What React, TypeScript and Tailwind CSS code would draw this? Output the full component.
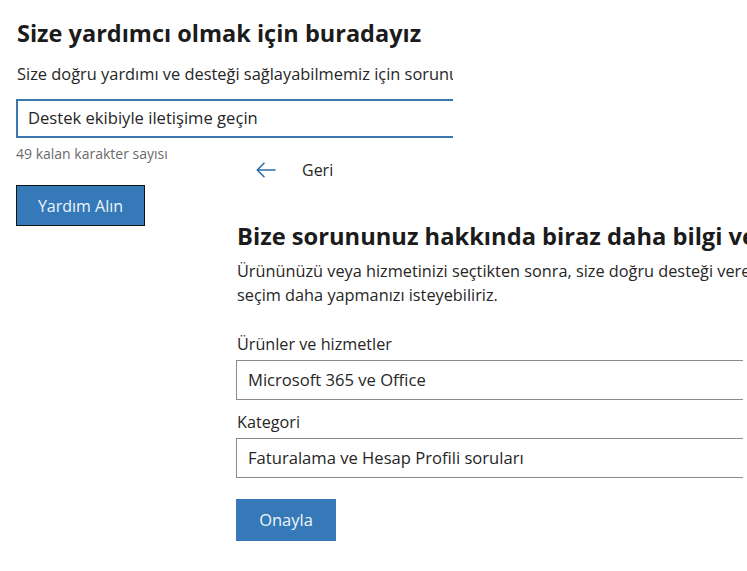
import React from "react";

const font = { fontFamily: '"Open Sans", "Noto Sans", Arial, sans-serif' };

function ArrowLeft() {
  return (
    <svg width="20" height="16" viewBox="0 0 20 16" fill="none" stroke="#2f6aa6" strokeWidth="1.6" strokeLinecap="round" strokeLinejoin="round">
      <path d="M19 8H1.5" />
      <path d="M8 1.2L1.3 8L8 14.8" />
    </svg>
  );
}

export default function App() {
  return (
    <div className="relative w-[747px] h-[571px] overflow-hidden bg-white text-[#262626]" style={font}>
      {/* first help form, cut off at its right edge */}
      <section className="w-[453px] overflow-hidden pl-4 pt-[17px]">
        <h1 className="whitespace-nowrap pl-px text-[23.5px] font-bold leading-[32px] text-[#1b1b1b]">
          Size yardımcı olmak için buradayız
        </h1>
        <p className="mt-[13px] whitespace-nowrap pl-px text-[16.4px] leading-[24px]">
          Size doğru yardımı ve desteği sağlayabilmemiz için sorununuzu kısaca açıklayın.
        </p>
        <div className="mt-[13px] flex h-[39px] w-[480px] items-center whitespace-nowrap border-2 border-[#3b78ae] px-[10px] text-[16.6px]">
          Destek ekibiyle iletişime geçin
        </div>
        <p className="mt-[7px] text-[14px] leading-[18px] text-[#6b6b6b]">49 kalan karakter sayısı</p>
        <button className="mt-[22px] h-[41px] w-[129px] border border-[#111] bg-[#3579b8] text-[16px] text-[#eef4fa]">
          Yardım Alın
        </button>
      </section>

      {/* follow-up panel laid over the page */}
      <section className="absolute left-[236px] top-[156px] right-[4px]">
        <div className="flex h-[28px] items-center pl-[20px]">
          <ArrowLeft />
          <span className="ml-[26px] text-[16px]">Geri</span>
        </div>
        <h2 className="mt-[36px] whitespace-nowrap pl-px text-[23.7px] font-bold leading-[32px] text-[#1b1b1b]">
          Bize sorununuz hakkında biraz daha bilgi verin
        </h2>
        <p className="mt-[7px] whitespace-nowrap pl-px text-[16.3px] leading-[24px]">
          Ürününüzü veya hizmetinizi seçtikten sonra, size doğru desteği verebilmemiz için bir
          <br />
          seçim daha yapmanızı isteyebiliriz.
        </p>
        <label className="mt-[25px] block pl-px text-[16.2px] leading-[24px]">Ürünler ve hizmetler</label>
        <div className="mt-[4px] flex h-[40px] items-center whitespace-nowrap border border-r-0 border-[#8a8a8a] px-[11px] text-[16.6px]">
          Microsoft 365 ve Office
        </div>
        <label className="mt-[10px] block pl-px text-[16.2px] leading-[24px]">Kategori</label>
        <div className="mt-[4px] flex h-[40px] items-center whitespace-nowrap border border-r-0 border-[#8a8a8a] px-[11px] text-[16.6px]">
          Faturalama ve Hesap Profili soruları
        </div>
        <button className="mt-[21px] h-[42px] w-[100px] bg-[#3579b8] text-[16.5px] text-[#eef4fa]">
          Onayla
        </button>
      </section>
    </div>
  );
}
